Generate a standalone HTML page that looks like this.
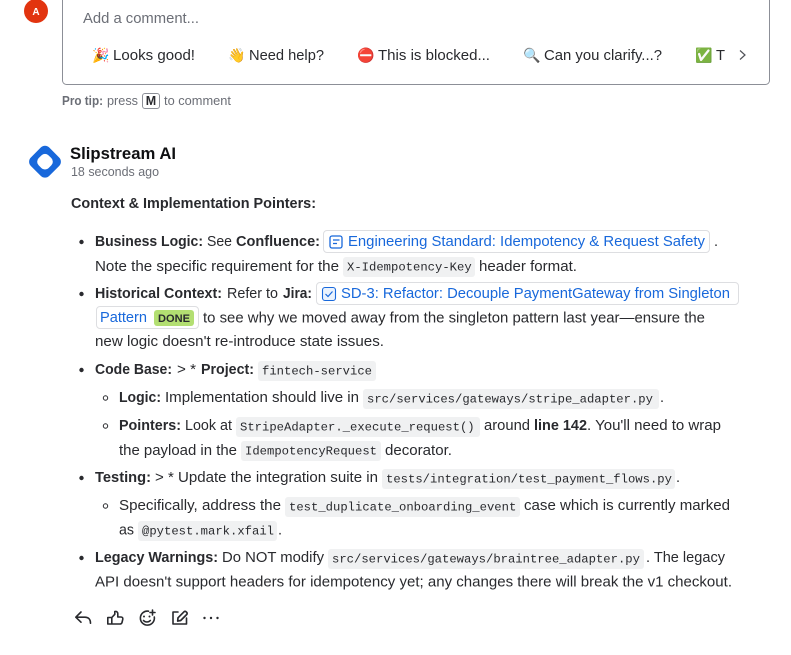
<!DOCTYPE html>
<html><head><meta charset="utf-8">
<style>
html,body{margin:0;padding:0;background:#fff;width:791px;height:655px;overflow:hidden}
svg{display:block}
text{font-family:"Liberation Sans",sans-serif;font-size:14.5px;fill:#292a2e}
.b{font-weight:700}
.m{font-family:"Liberation Mono",monospace;font-size:12.22px}
.l{fill:#1868db}
.s{fill:#6b6e76;font-size:12.5px}
.c{fill:#f0f1f2}
.chip{fill:#fff;stroke:#dddee1}
.i{fill:none;stroke:#292a2e;stroke-width:1.6;stroke-linecap:round;stroke-linejoin:round}
.e{font-family:"Noto Color Emoji","Liberation Sans",sans-serif;font-size:14px}
</style></head><body>
<svg width="791" height="655" viewBox="0 0 791 655" xmlns="http://www.w3.org/2000/svg">
<circle cx="36" cy="11" r="12" fill="#e2340f"/>
<text x="36" y="15" text-anchor="middle" style="fill:#fff;font-size:10px;font-weight:700">A</text>
<path d="M62.500 -5V80.500a4 4 0 0 0 4 4H765.500a4 4 0 0 0 4-4V-5" fill="none" stroke="#8c8f97"/>
<text x="83" y="23" textLength="116" lengthAdjust="spacingAndGlyphs" style="fill:#6b6e76">Add a comment...</text>

<text x="92" y="60" class="e">🎉</text><text x="113" y="60" textLength="82" lengthAdjust="spacingAndGlyphs">Looks good!</text>
<text x="228" y="60" class="e">👋</text><text x="249" y="60" textLength="75" lengthAdjust="spacingAndGlyphs">Need help?</text>
<text x="357" y="60" class="e">⛔</text><text x="378" y="60" textLength="112" lengthAdjust="spacingAndGlyphs">This is blocked...</text>
<text x="523" y="60" class="e">🔍</text><text x="544" y="60" textLength="118" lengthAdjust="spacingAndGlyphs">Can you clarify...?</text>
<text x="695" y="60" class="e">✅</text><text x="716" y="60" textLength="9" lengthAdjust="spacingAndGlyphs">T</text>
<path d="M740 50.500l5 4.500-5 4.500" fill="none" stroke="#505258" stroke-width="1.2"/>

<text x="62" y="105" class="s b" textLength="41" lengthAdjust="spacingAndGlyphs">Pro tip:</text>
<text x="107" y="105" class="s" textLength="31" lengthAdjust="spacingAndGlyphs">press</text>
<rect x="142.500" y="93.500" width="17" height="15" rx="2.500" fill="#fff" stroke="#8c8f97"/>
<text x="151" y="105" text-anchor="middle" class="s b" style="fill:#292a2e">M</text>
<text x="164" y="105" class="s" textLength="67" lengthAdjust="spacingAndGlyphs">to comment</text>

<rect x="32" y="148.700" width="26" height="26" rx="6" fill="#1868db" transform="rotate(45 45 161.700)"/>
<rect x="38" y="154.700" width="14" height="14" rx="5" fill="#fff" transform="rotate(45 45 161.700)"/>
<text x="70" y="159" class="b" style="fill:#0f1012;font-size:16.5px" textLength="106" lengthAdjust="spacingAndGlyphs">Slipstream AI</text>
<text x="71" y="176" class="s" textLength="88" lengthAdjust="spacingAndGlyphs">18 seconds ago</text>
<text x="71" y="208" class="b" textLength="245" lengthAdjust="spacingAndGlyphs">Context &amp; Implementation Pointers:</text>

<circle cx="81.500" cy="242" r="2.200" fill="#292a2e"/>
<text x="95" y="246" class="b" textLength="108" lengthAdjust="spacingAndGlyphs">Business Logic:</text>
<text x="207" y="246" textLength="25" lengthAdjust="spacingAndGlyphs">See</text>
<text x="236" y="246" class="b" textLength="84" lengthAdjust="spacingAndGlyphs">Confluence:</text>
<rect x="323.500" y="230.500" width="386" height="22" rx="3.500" class="chip"/>
<rect x="330" y="236" width="12" height="12" rx="2" fill="none" stroke="#1868db" stroke-width="1.300"/>
<path d="M333 240h6.500M333 243.500h4" stroke="#1868db" stroke-width="1.300" fill="none"/>
<text x="348" y="246" class="l" textLength="357" lengthAdjust="spacingAndGlyphs">Engineering Standard: Idempotency &amp; Request Safety</text>
<text x="714" y="246">.</text>

<text x="95" y="271" textLength="244" lengthAdjust="spacingAndGlyphs">Note the specific requirement for the</text>
<rect x="343" y="257" width="132" height="20" rx="3" class="c"/>
<text x="347" y="270.500" class="m">X-Idempotency-Key</text>
<text x="479" y="271" textLength="98" lengthAdjust="spacingAndGlyphs">header format.</text>

<circle cx="81.500" cy="294" r="2.200" fill="#292a2e"/>
<text x="95" y="298" class="b" textLength="127" lengthAdjust="spacingAndGlyphs">Historical Context:</text>
<text x="227" y="298" textLength="51" lengthAdjust="spacingAndGlyphs">Refer to</text>
<text x="283" y="298" class="b" textLength="29" lengthAdjust="spacingAndGlyphs">Jira:</text>
<rect x="316.500" y="282.500" width="422" height="22" rx="3.500" class="chip"/>
<rect x="322.500" y="287.500" width="13" height="13" rx="2.500" fill="#e9f2fe" stroke="#1868db" stroke-width="1.100"/>
<path d="M325.500 294l2.500 2.500 4.500-5" fill="none" stroke="#1868db" stroke-width="1.200"/>
<text x="341" y="298" class="l" textLength="389" lengthAdjust="spacingAndGlyphs">SD-3: Refactor: Decouple PaymentGateway from Singleton</text>

<rect x="96.500" y="306.500" width="102" height="22" rx="3.500" class="chip"/>
<text x="100" y="322" class="l" textLength="47" lengthAdjust="spacingAndGlyphs">Pattern</text>
<rect x="154" y="310" width="40" height="16" rx="3" fill="#b3df72"/>
<text x="158" y="322" class="b" style="font-size:11px" textLength="32" lengthAdjust="spacingAndGlyphs">DONE</text>
<text x="203" y="322.500" textLength="502" lengthAdjust="spacingAndGlyphs">to see why we moved away from the singleton pattern last year—ensure the</text>
<text x="95" y="346" textLength="289" lengthAdjust="spacingAndGlyphs">new logic doesn't re-introduce state issues.</text>

<circle cx="81.500" cy="370" r="2.200" fill="#292a2e"/>
<text x="95" y="374" class="b" textLength="77" lengthAdjust="spacingAndGlyphs">Code Base:</text>
<text x="177" y="374" textLength="19" lengthAdjust="spacingAndGlyphs">&gt; *</text>
<text x="201" y="374" class="b" textLength="53" lengthAdjust="spacingAndGlyphs">Project:</text>
<rect x="258" y="361" width="118" height="20" rx="3" class="c"/>
<text x="262" y="374.500" class="m">fintech-service</text>

<circle cx="105.500" cy="398" r="2.200" fill="none" stroke="#292a2e"/>
<text x="119" y="402" class="b" textLength="42" lengthAdjust="spacingAndGlyphs">Logic:</text>
<text x="165" y="402" textLength="194" lengthAdjust="spacingAndGlyphs">Implementation should live in</text>
<rect x="363" y="389" width="296" height="20" rx="3" class="c"/>
<text x="367" y="402.500" class="m">src/services/gateways/stripe_adapter.py</text>
<text x="660" y="402">.</text>

<circle cx="105.500" cy="426" r="2.200" fill="none" stroke="#292a2e"/>
<text x="119" y="430" class="b" textLength="62" lengthAdjust="spacingAndGlyphs">Pointers:</text>
<text x="185" y="430" textLength="47" lengthAdjust="spacingAndGlyphs">Look at</text>
<rect x="236" y="417" width="244" height="20" rx="3" class="c"/>
<text x="240" y="430.500" class="m">StripeAdapter._execute_request()</text>
<text x="484" y="430" textLength="46" lengthAdjust="spacingAndGlyphs">around</text>
<text x="534" y="430" class="b" textLength="53" lengthAdjust="spacingAndGlyphs">line 142</text>
<text x="587" y="430" textLength="134" lengthAdjust="spacingAndGlyphs">. You'll need to wrap</text>

<text x="119" y="455" textLength="118" lengthAdjust="spacingAndGlyphs">the payload in the</text>
<rect x="241" y="441" width="140" height="20" rx="3" class="c"/>
<text x="245" y="454.500" class="m">IdempotencyRequest</text>
<text x="385" y="455" textLength="67" lengthAdjust="spacingAndGlyphs">decorator.</text>

<circle cx="81.500" cy="478" r="2.200" fill="#292a2e"/>
<text x="95" y="482" class="b" textLength="56" lengthAdjust="spacingAndGlyphs">Testing:</text>
<text x="155" y="482" textLength="223" lengthAdjust="spacingAndGlyphs">&gt; * Update the integration suite in</text>
<rect x="382" y="469" width="293" height="20" rx="3" class="c"/>
<text x="386" y="482.500" class="m">tests/integration/test_payment_flows.py</text>
<text x="676" y="482">.</text>

<circle cx="105.500" cy="506" r="2.200" fill="none" stroke="#292a2e"/>
<text x="119" y="510" textLength="162" lengthAdjust="spacingAndGlyphs">Specifically, address the</text>
<rect x="285" y="497" width="235" height="20" rx="3" class="c"/>
<text x="289" y="510.500" class="m">test_duplicate_onboarding_event</text>
<text x="524" y="510" textLength="206" lengthAdjust="spacingAndGlyphs">case which is currently marked</text>

<text x="119" y="534.500" textLength="15" lengthAdjust="spacingAndGlyphs">as</text>
<rect x="138" y="521" width="139" height="20" rx="3" class="c"/>
<text x="142" y="534.500" class="m">@pytest.mark.xfail</text>
<text x="278" y="534.500">.</text>

<circle cx="81.500" cy="558" r="2.200" fill="#292a2e"/>
<text x="95" y="562" textLength="123" lengthAdjust="spacingAndGlyphs" class="b">Legacy Warnings:</text>
<text x="222" y="562" textLength="102" lengthAdjust="spacingAndGlyphs">Do NOT modify</text>
<rect x="328" y="549" width="316" height="20" rx="3" class="c"/>
<text x="332" y="562.500" class="m">src/services/gateways/braintree_adapter.py</text>
<text x="646" y="562" textLength="79" lengthAdjust="spacingAndGlyphs">. The legacy</text>
<text x="95" y="586.500" textLength="637" lengthAdjust="spacingAndGlyphs">API doesn't support headers for idempotency yet; any changes there will break the v1 checkout.</text>

<path class="i" d="M81 612l-5.200 5.200 5.200 5M76 617.200h9c3.500 0 5.500 2.300 5.500 6"/>
<path class="i" d="M107.800 617.500h4v6.500h-4zM111.800 617.500l3-3.200v-2.800c1.800-.5 3 .7 3 2.300v3.200h3.200c1.300 0 2.100 1 1.800 2.200l-.8 3.300c-.3 1-1.100 1.500-2 1.500h-8.200"/>
<path class="i" d="M148.500 611.200a7 7 0 1 0 5.800 5.800M143.500 620.500c1.800 2 5 2 6.800 0M152.500 610v5M150 612.500h5"/>
<circle cx="144" cy="616.500" r="1" fill="#292a2e"/><circle cx="149.500" cy="616.500" r="1" fill="#292a2e"/>
<path class="i" d="M178 612h-5v12h13.500v-6"/>
<path d="M178 617.800l6-6a1.500 1.500 0 0 1 2.100 0l.6.600a1.500 1.500 0 0 1 0 2.100l-6 6-3 .6z" fill="none" stroke="#292a2e" stroke-width="1.700" stroke-linejoin="round"/>
<circle cx="204.500" cy="618" r="1.200" fill="#292a2e"/><circle cx="211" cy="618" r="1.200" fill="#292a2e"/><circle cx="217.500" cy="618" r="1.200" fill="#292a2e"/>
</svg>
</body></html>
